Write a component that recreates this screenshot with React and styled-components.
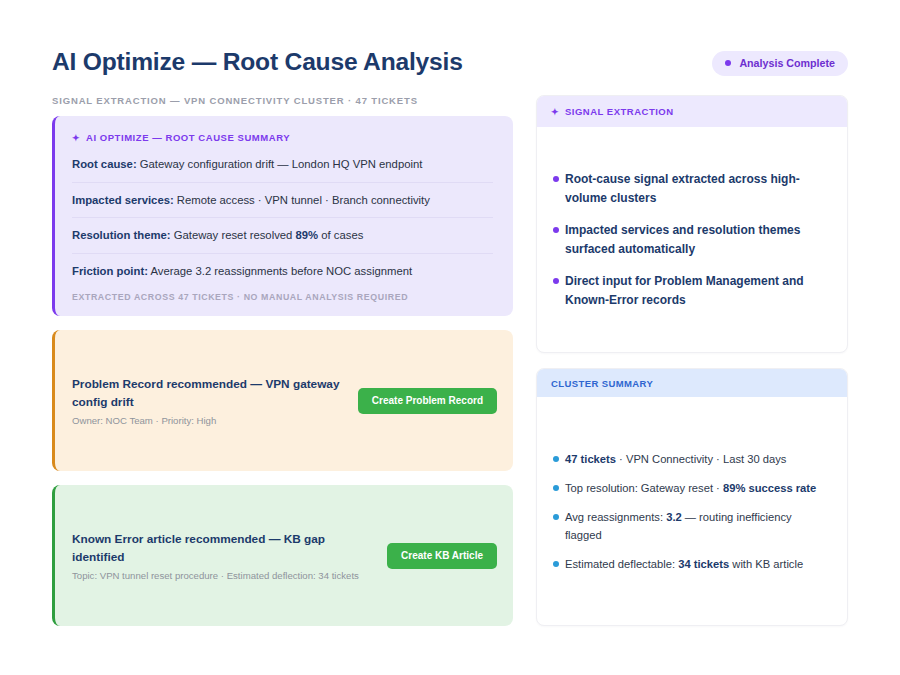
import styled, { createGlobalStyle } from 'styled-components';

const GlobalStyle = createGlobalStyle`
  * { box-sizing: border-box; }
  html, body { margin: 0; padding: 0; background: #ffffff; }
  body { font-family: 'Liberation Sans', Arial, sans-serif; }
`;

const Page = styled.div`
  width: 900px;
  height: 675px;
  padding: 42px 52px 49px;
  display: flex;
  flex-direction: column;
  background: #ffffff;
`;

const Header = styled.div`
  display: flex;
  justify-content: space-between;
  align-items: center;
  height: 40px;
  margin-bottom: 13px;
`;

const Title = styled.h1`
  margin: 0;
  font-size: 24.6px;
  font-weight: 700;
  letter-spacing: -0.2px;
  color: #1c3a6b;
`;

const Badge = styled.div`
  display: flex;
  align-items: center;
  gap: 8px;
  height: 25px;
  margin-top: 2px;
  padding: 0 13px;
  border-radius: 13px;
  background: #ede9fe;
  color: #6d2fd0;
  font-size: 10.7px;
  font-weight: 700;
`;

const Dot = styled.span`
  width: ${p => p.size || 6}px;
  height: ${p => p.size || 6}px;
  border-radius: 50%;
  background: ${p => p.color};
  flex-shrink: 0;
`;

const Columns = styled.div`
  flex: 1;
  display: grid;
  grid-template-columns: 461px 1fr;
  gap: 23px;
  min-height: 0;
`;

const Column = styled.div`
  display: flex;
  flex-direction: column;
  gap: ${p => p.gap}px;
  min-height: 0;
`;

const Eyebrow = styled.div`
  height: 13px;
  font-size: 9.5px;
  font-weight: 700;
  letter-spacing: ${p => p.spacing ?? 0.6}px;
  text-transform: uppercase;
  color: ${p => p.color};
  display: flex;
  align-items: center;
  gap: 6px;
`;

const SubTitle = styled(Eyebrow)`
  margin-bottom: -3px;
  height: 10px;
`;

const SummaryCard = styled.div`
  background: #ece8fc;
  border-left: 3px solid #7c3aed;
  border-radius: 8px;
  padding: 15px 20px 14px 17px;
`;

const SummaryRows = styled.div`
  margin-top: 3px;
`;

const SummaryRow = styled.div`
  font-size: 11.3px;
  color: #2b3345;
  padding: 9px 0;
  line-height: 16.5px;
  border-bottom: 1px solid #e0dbf5;

  &:last-of-type {
    border-bottom: none;
  }

  b {
    color: #1c3a6b;
  }
`;

const Footnote = styled.div`
  margin-top: 4px;
  font-size: 8.8px;
  font-weight: 700;
  letter-spacing: 0.6px;
  color: #a9a6bd;
  text-transform: uppercase;
`;

const ActionCard = styled.div`
  flex: 1;
  display: flex;
  align-items: center;
  gap: 12px;
  padding: 0 16px 0 17px;
  background: ${p => p.bg};
  border-left: 3px solid ${p => p.accent};
  border-radius: 8px;
`;

const ActionText = styled.div`
  flex: 1;
  min-width: 0;
`;

const ActionTitle = styled.div`
  font-size: 11.8px;
  font-weight: 700;
  line-height: 18px;
  color: #1c3a6b;
`;

const ActionMeta = styled.div`
  margin-top: 4px;
  font-size: 9.6px;
  color: #8f949c;
`;

const GreenButton = styled.button`
  flex-shrink: 0;
  height: 26px;
  padding: 0 14px;
  border: none;
  border-radius: 5px;
  background: #3bb14a;
  color: #ffffff;
  font-family: inherit;
  font-size: 10px;
  font-weight: 700;
`;

const SideCard = styled.div`
  flex: 1;
  display: flex;
  flex-direction: column;
  border: 1px solid #efeff3;
  border-radius: 8px;
  overflow: hidden;
  background: #ffffff;
  box-shadow: 0 1px 2px rgba(20, 20, 60, 0.03);
`;

const SideHeader = styled.div`
  height: ${p => p.h}px;
  flex-shrink: 0;
  display: flex;
  align-items: center;
  padding: 0 14px;
  background: ${p => p.bg};
`;

const SideBody = styled.div`
  flex: 1;
  display: flex;
  flex-direction: column;
  justify-content: center;
  gap: ${p => p.gap}px;
  padding: 0 18px 0 16px;
`;

const Bullet = styled.div`
  display: flex;
  gap: 6px;
  font-size: ${p => (p.strong ? 12 : 11.2)}px;
  font-weight: ${p => (p.strong ? 700 : 400)};
  line-height: ${p => (p.strong ? 19 : 18)}px;
  color: ${p => (p.strong ? '#1c3a6b' : '#2f3a4d')};

  & > span:first-child {
    margin-top: 6px;
  }

  b {
    color: #1c3a6b;
  }
`;

const Star = styled.span`
  font-size: 9px;
  letter-spacing: 0;
`;

export default function App() {
  return (
    <>
      <GlobalStyle />
      <Page>
        <Header>
          <Title>AI Optimize — Root Cause Analysis</Title>
          <Badge>
            <Dot color="#7c3aed" size={6} />
            Analysis Complete
          </Badge>
        </Header>

        <Columns>
          <Column gap={14}>
            <SubTitle color="#9b9eab" spacing={0.85}>
              Signal Extraction — VPN Connectivity Cluster · 47 Tickets
            </SubTitle>

            <SummaryCard>
              <Eyebrow color="#7c3aed" spacing={0.55}>
                <Star>✦</Star> AI Optimize — Root Cause Summary
              </Eyebrow>
              <SummaryRows>
                <SummaryRow>
                  <b>Root cause:</b> Gateway configuration drift — London HQ VPN endpoint
                </SummaryRow>
                <SummaryRow>
                  <b>Impacted services:</b> Remote access · VPN tunnel · Branch connectivity
                </SummaryRow>
                <SummaryRow>
                  <b>Resolution theme:</b> Gateway reset resolved <b>89%</b> of cases
                </SummaryRow>
                <SummaryRow>
                  <b>Friction point:</b> Average 3.2 reassignments before NOC assignment
                </SummaryRow>
              </SummaryRows>
              <Footnote>Extracted across 47 tickets · No manual analysis required</Footnote>
            </SummaryCard>

            <ActionCard bg="#fdf0de" accent="#d98a1c">
              <ActionText>
                <ActionTitle>Problem Record recommended — VPN gateway config drift</ActionTitle>
                <ActionMeta>Owner: NOC Team · Priority: High</ActionMeta>
              </ActionText>
              <GreenButton>Create Problem Record</GreenButton>
            </ActionCard>

            <ActionCard bg="#e2f3e4" accent="#2f9e3f">
              <ActionText>
                <ActionTitle>Known Error article recommended — KB gap identified</ActionTitle>
                <ActionMeta>Topic: VPN tunnel reset procedure · Estimated deflection: 34 tickets</ActionMeta>
              </ActionText>
              <GreenButton>Create KB Article</GreenButton>
            </ActionCard>
          </Column>

          <Column gap={15}>
            <SideCard>
              <SideHeader h={31} bg="#ede9fe">
                <Eyebrow color="#7c3aed" spacing={0.5}>
                  <Star>✦</Star> Signal Extraction
                </Eyebrow>
              </SideHeader>
              <SideBody gap={13}>
                <Bullet strong>
                  <Dot color="#7c3aed" size={6} />
                  <span>Root-cause signal extracted across high-volume clusters</span>
                </Bullet>
                <Bullet strong>
                  <Dot color="#7c3aed" size={6} />
                  <span>Impacted services and resolution themes surfaced automatically</span>
                </Bullet>
                <Bullet strong>
                  <Dot color="#7c3aed" size={6} />
                  <span>Direct input for Problem Management and Known-Error records</span>
                </Bullet>
              </SideBody>
            </SideCard>

            <SideCard>
              <SideHeader h={28} bg="#dde9fd">
                <Eyebrow color="#2f66d0" spacing={0.4}>Cluster Summary</Eyebrow>
              </SideHeader>
              <SideBody gap={11}>
                <Bullet>
                  <Dot color="#2a9bd8" size={6} />
                  <span><b>47 tickets</b> · VPN Connectivity · Last 30 days</span>
                </Bullet>
                <Bullet>
                  <Dot color="#2a9bd8" size={6} />
                  <span>Top resolution: Gateway reset · <b>89% success rate</b></span>
                </Bullet>
                <Bullet>
                  <Dot color="#2a9bd8" size={6} />
                  <span>Avg reassignments: <b>3.2</b> — routing inefficiency flagged</span>
                </Bullet>
                <Bullet>
                  <Dot color="#2a9bd8" size={6} />
                  <span>Estimated deflectable: <b>34 tickets</b> with KB article</span>
                </Bullet>
              </SideBody>
            </SideCard>
          </Column>
        </Columns>
      </Page>
    </>
  );
}
